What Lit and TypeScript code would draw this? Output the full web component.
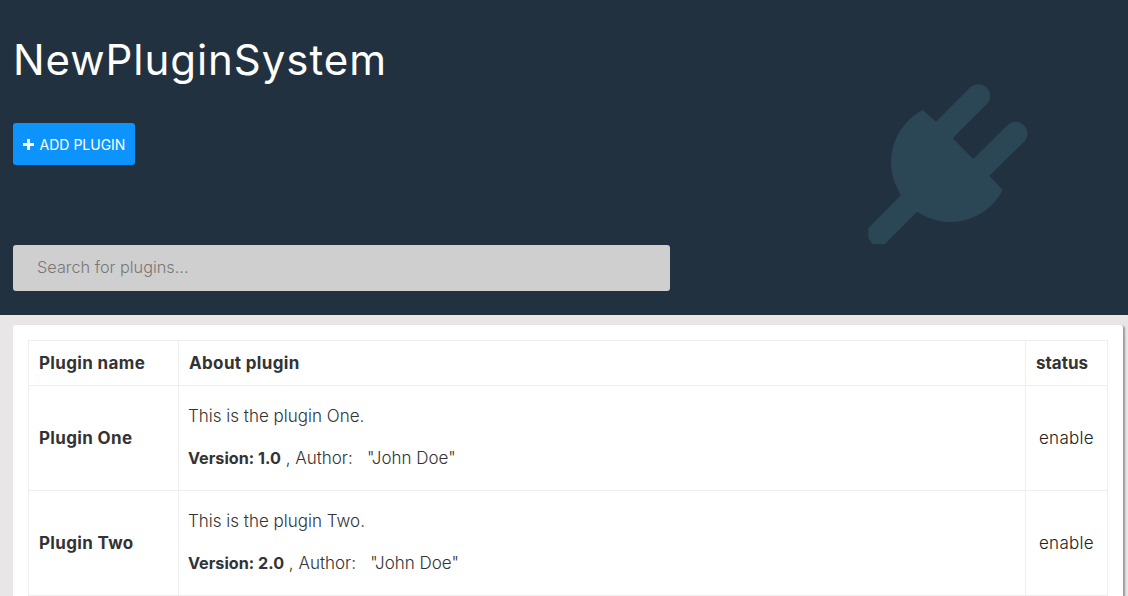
import { LitElement, html, css } from "lit";
import { customElement } from "lit/decorators.js";

const plugins = [
  { name: "Plugin One", about: "This is the plugin One.", version: "1.0" },
  { name: "Plugin Two", about: "This is the plugin Two.", version: "2.0" },
];

@customElement("app-root")
export class AppRoot extends LitElement {
  static styles = css`
    :host {
      display: block;
      height: 596px;
      overflow: hidden;
      background: #e8e6e6;
      font-family: Inter, "Noto Sans", sans-serif;
      color: #333;
    }
    .hero {
      position: relative;
      height: 315px;
      box-sizing: border-box;
      background: #223140;
      padding: 36px 13px 24px;
      display: flex;
      flex-direction: column;
      align-items: flex-start;
    }
    h1 {
      margin: 0;
      font-size: 42px;
      line-height: 48px;
      font-weight: 400;
      color: #fff;
      letter-spacing: 0.95px;
    }
    .add {
      margin-top: 39px;
      width: 122px;
      height: 42px;
      box-sizing: border-box;
      border: 0;
      border-radius: 3px;
      background: #0d94fc;
      color: #fff;
      font: inherit;
      font-size: 14px;
      display: flex;
      align-items: center;
      justify-content: center;
      gap: 6px;
      padding: 0;
    }
    .add svg { width: 11px; height: 11px; }
    .search {
      margin-top: auto;
      width: 657px;
      height: 46px;
      box-sizing: border-box;
      border-radius: 3px;
      background: #cfcfcf;
      color: #777;
      font-size: 16.3px;
      font-weight: 300;
      display: flex;
      align-items: center;
      padding: 0 0 2px 24px;
    }
    .plug {
      position: absolute;
      left: 841px;
      top: 60px;
      width: 210px;
      height: 200px;
    }
    .card {
      margin: 10px 5px 0 13px;
      padding: 15px;
      background: #fff;
      border-radius: 3px;
      box-shadow: 2px 1px 2px #999;
    }
    table {
      width: 1079px;
      border-collapse: collapse;
      table-layout: fixed;
      font-size: 17px;
    }
    th, td {
      border: 1px solid #eee;
      padding: 0 10px;
      text-align: left;
      box-sizing: border-box;
    }
    th {
      height: 45px;
      font-weight: 700;
      letter-spacing: 0.35px;
    }
    th.status { letter-spacing: 0; }
    td { height: 105px; font-weight: 300; }
    td.name {
      font-weight: 700;
      letter-spacing: 0.35px;
    }
    td.about { padding: 0 9px 2px; }
    td.status {
      text-align: center;
      padding: 0;
      color: #222;
      letter-spacing: 0.3px;
    }
    p { margin: 0; line-height: 20px; }
    p + p { margin-top: 22px; }
    b { font-weight: 700; font-size: 16.2px; }
    .author { white-space: pre; }
  `;

  render() {
    return html`
      <div class="hero">
        <h1>NewPluginSystem</h1>
        <button class="add">
          <svg viewBox="0 0 11 11"><path fill="#fff" d="M4 0h3v4h4v3H7v4H4V7H0V4h4z" /></svg>
          ADD PLUGIN
        </button>
        <div class="search">Search for plugins...</div>
        <svg class="plug" viewBox="0 0 210 200">
          <path
            fill="#2b4756"
            d="M81.7 50L95 61.7L129.9 26.8A11.8 11.8 0 0 1 146.5 43.4L111.7 78.3L132.3 99L167.2 64.5A11.8 11.8 0 0 1 183.8 81.1L148.3 115.7L161.7 130A59 59 0 0 1 76 151.7L44 184H31.7L27.3 178.3V168.3L60 135A59 59 0 0 1 81.7 50Z"
          />
        </svg>
      </div>
      <div class="card">
        <table>
          <colgroup><col style="width:150px" /><col style="width:847px" /><col style="width:82px" /></colgroup>
          <thead><tr><th>Plugin name</th><th>About plugin</th><th class="status">status</th></tr></thead>
          <tbody>
            ${plugins.map(
              (p) => html`<tr>
                <td class="name">${p.name}</td>
                <td class="about">
                  <p>${p.about}</p>
                  <p><b>Version: ${p.version}</b> , Author: <span class="author">  "John Doe"</span></p>
                </td>
                <td class="status">enable</td>
              </tr>`
            )}
          </tbody>
        </table>
      </div>
    `;
  }
}
